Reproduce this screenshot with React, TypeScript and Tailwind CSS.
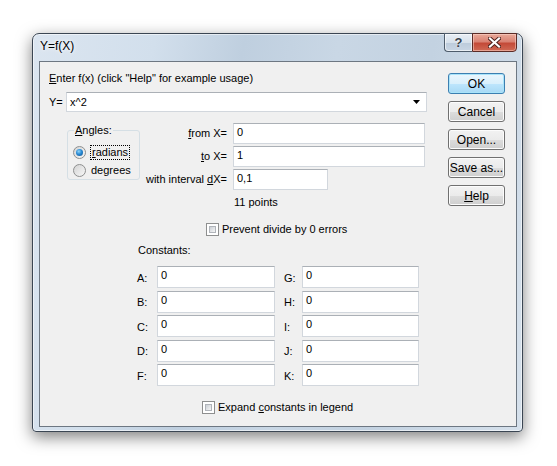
import React from "react";

const FONT = "font-['Liberation_Sans',Arial,sans-serif]";

function U({ children }: { children: React.ReactNode }) {
  return <span className="underline underline-offset-[1px]">{children}</span>;
}

function TextBox({ value, w }: { value: string; w: string }) {
  return (
    <div
      className={`${w} h-[21px] bg-white border border-[#d2d7dd] border-t-[#abb0b6] pl-[3px] pt-[2px] leading-[13px]`}
    >
      {value}
    </div>
  );
}

function WinButton({ label, focus }: { label: React.ReactNode; focus?: boolean }) {
  return (
    <div
      className={`w-[57px] h-[21px] rounded-[3px] border flex items-center justify-center text-[12px] ${
        focus
          ? "border-[#3c7fb1] bg-[linear-gradient(180deg,#ebf6fd_0%,#d9f0fc_50%,#bee6fd_51%,#a7d9f5_100%)] shadow-[inset_0_0_0_1px_#a9e4fa]"
          : "border-[#707070] bg-[linear-gradient(180deg,#f2f2f2_0%,#ebebeb_50%,#dddddd_51%,#cfcfcf_100%)] shadow-[inset_0_0_0_1px_#fcfcfc]"
      }`}
    >
      {label}
    </div>
  );
}

function Radio({ checked }: { checked?: boolean }) {
  return (
    <div className="w-[13px] h-[13px] rounded-full border border-[#8e8f8f] bg-[linear-gradient(135deg,#d4d4d4,#f7f7f7)] flex items-center justify-center">
      {checked && (
        <div className="w-[7px] h-[7px] rounded-full bg-[radial-gradient(circle_at_40%_35%,#8fd5f8_0%,#2a8ad4_45%,#0d4e8a_100%)]" />
      )}
    </div>
  );
}

function Check() {
  return (
    <div className="w-[13px] h-[13px] border border-[#8e8f8f] bg-white p-[2px]">
      <div className="w-full h-full bg-[linear-gradient(135deg,#cbcfd5,#f6f6f6)] border border-[#b0b4ba]" />
    </div>
  );
}

const CONSTS: [string, string][] = [
  ["A:", "G:"],
  ["B:", "H:"],
  ["C:", "I:"],
  ["D:", "J:"],
  ["F:", "K:"],
];

export default function App() {
  return (
    <div className={`w-[557px] h-[466px] bg-white overflow-hidden pt-[33px] pl-[32px] ${FONT} text-[11px] text-black`}>
      <div className="w-[491px] h-[399px] border border-[#3b4653] rounded-t-[7px] rounded-b-[4px] bg-[linear-gradient(100deg,#dbe5f0_0%,#d2dfec_22%,#bfcfdf_38%,#c9d7e5_55%,#c3d2e1_72%,#d6e1ec_100%)] shadow-[0_5px_16px_rgba(0,0,0,0.5),inset_0_0_0_1px_rgba(255,255,255,0.55)] flex flex-col">
        {/* title bar */}
        <div className="h-[27px] flex items-start justify-between">
          <div className="pl-[7px] pt-[5px] text-[12px] leading-[15px] text-black [text-shadow:0_0_6px_#fff,0_0_3px_#fff]">
            Y=f(X)
          </div>
          <div className="flex mr-[5px] -mt-px">
            <div className="w-[28px] h-[19px] border border-[#4e5c6b] border-r-0 rounded-bl-[4px] bg-[linear-gradient(180deg,#e8eef5_0%,#d7e1eb_50%,#bccbdb_51%,#c9d6e4_100%)] shadow-[inset_0_0_0_1px_rgba(255,255,255,0.6)] flex items-center justify-center">
              <span className="font-bold text-[13px] leading-none text-[#38424d] [text-shadow:0_0_2px_#fff]">?</span>
            </div>
            <div className="w-[45px] h-[19px] border border-[#5b2b26] rounded-br-[4px] bg-[linear-gradient(180deg,#e9a999_0%,#d98273_45%,#c44a38_55%,#cf6a55_100%)] shadow-[inset_0_0_0_1px_rgba(255,220,210,0.5)] flex items-center justify-center">
              <svg width="13" height="11" viewBox="0 0 13 11">
                <path d="M2 1.5 L11 9.5 M11 1.5 L2 9.5" stroke="#4a1f1a" strokeWidth="4" strokeLinecap="square" />
                <path d="M2 1.5 L11 9.5 M11 1.5 L2 9.5" stroke="#ffffff" strokeWidth="2.2" strokeLinecap="square" />
              </svg>
            </div>
          </div>
        </div>

        {/* client */}
        <div className="ml-[6px] w-[478px] h-[366px] border border-[#6d7782] bg-[#f0f0f0] flex">
          <div className="w-[408px] flex flex-col">
            <div className="mt-[10px] ml-[9px] leading-[13px]">
              <U>E</U>nter f(x) (click "Help" for example usage)
            </div>

            <div className="mt-[7px] ml-[9px] flex items-center">
              <div className="w-[17px] leading-[13px]">Y=</div>
              <div className="w-[361px] h-[20px] bg-white border border-[#d2d7dd] border-t-[#abb0b6] flex items-center justify-between pl-[3px] pr-[6px]">
                <span className="leading-[13px]">x^2</span>
                <svg width="7" height="4" viewBox="0 0 7 4">
                  <path d="M0 0 H7 L3.5 4 Z" fill="#000" />
                </svg>
              </div>
            </div>

            <div className="mt-[11px] flex items-start">
              <fieldset className="ml-[27px] mt-px w-[73px] h-[56px] border border-[#d5dfe5] rounded-[3px] pl-[5px]">
                <legend className="px-[1px] ml-[1px] leading-[13px]">
                  <U>A</U>ngles:
                </legend>
                <div className="mt-[8px] flex items-center gap-[4px]">
                  <Radio checked />
                  <span className="leading-[13px] border border-dotted border-black px-[1px]">
                    <U>r</U>adians
                  </span>
                </div>
                <div className="mt-[4px] flex items-center gap-[5px]">
                  <Radio />
                  <span className="leading-[13px]">degrees</span>
                </div>
              </fieldset>

              <div className="flex flex-col gap-[2px]">
                <div className="flex items-center">
                  <div className="w-[88px] text-right pr-[1px] leading-[13px]">
                    <U>f</U>rom X=
                  </div>
                  <div className="ml-[5px]">
                    <TextBox value="0" w="w-[192px]" />
                  </div>
                </div>
                <div className="flex items-center">
                  <div className="w-[88px] text-right pr-[1px] leading-[13px]">
                    <U>t</U>o X=
                  </div>
                  <div className="ml-[5px]">
                    <TextBox value="1" w="w-[192px]" />
                  </div>
                </div>
                <div className="flex items-center">
                  <div className="w-[88px] text-right pr-[1px] leading-[13px]">
                    with interval <U>d</U>X=
                  </div>
                  <div className="ml-[5px]">
                    <TextBox value="0,1" w="w-[95px]" />
                  </div>
                </div>
                <div className="mt-[4px] ml-[94px] leading-[13px]">11 points</div>
              </div>
            </div>

            <div className="mt-[14px] ml-[166px] flex items-center gap-[3px]">
              <Check />
              <span className="leading-[13px]">Prevent divide by 0 errors</span>
            </div>

            <div className="mt-[8px] ml-[98px] leading-[13px]">Constants:</div>

            <div className="mt-[9px] ml-[97px] flex flex-col gap-[2.5px]">
              {CONSTS.map(([a, b]) => (
                <div key={a} className="flex items-center">
                  <div className="w-[20px] leading-[13px] pt-[2px]">{a}</div>
                  <div className="w-[118px] h-[22px] bg-white border border-[#d2d7dd] border-t-[#abb0b6] pl-[3px] pt-[2px] leading-[13px]">
                    0
                  </div>
                  <div className="w-[27px] pl-[9px] leading-[13px] pt-[2px]">{b}</div>
                  <div className="w-[117px] h-[22px] bg-white border border-[#d2d7dd] border-t-[#abb0b6] pl-[3px] pt-[2px] leading-[13px]">
                    0
                  </div>
                </div>
              ))}
            </div>

            <div className="mt-[15px] ml-[162px] flex items-center gap-[3px]">
              <Check />
              <span className="leading-[13px]">
                Expand <U>c</U>onstants in legend
              </span>
            </div>
          </div>

          <div className="mt-[11px] ml-auto mr-[11px] flex flex-col gap-[7px]">
            <WinButton label="OK" focus />
            <WinButton label="Cancel" />
            <WinButton label="Open..." />
            <WinButton label="Save as..." />
            <WinButton
              label={
                <>
                  <U>H</U>elp
                </>
              }
            />
          </div>
        </div>
      </div>
    </div>
  );
}
